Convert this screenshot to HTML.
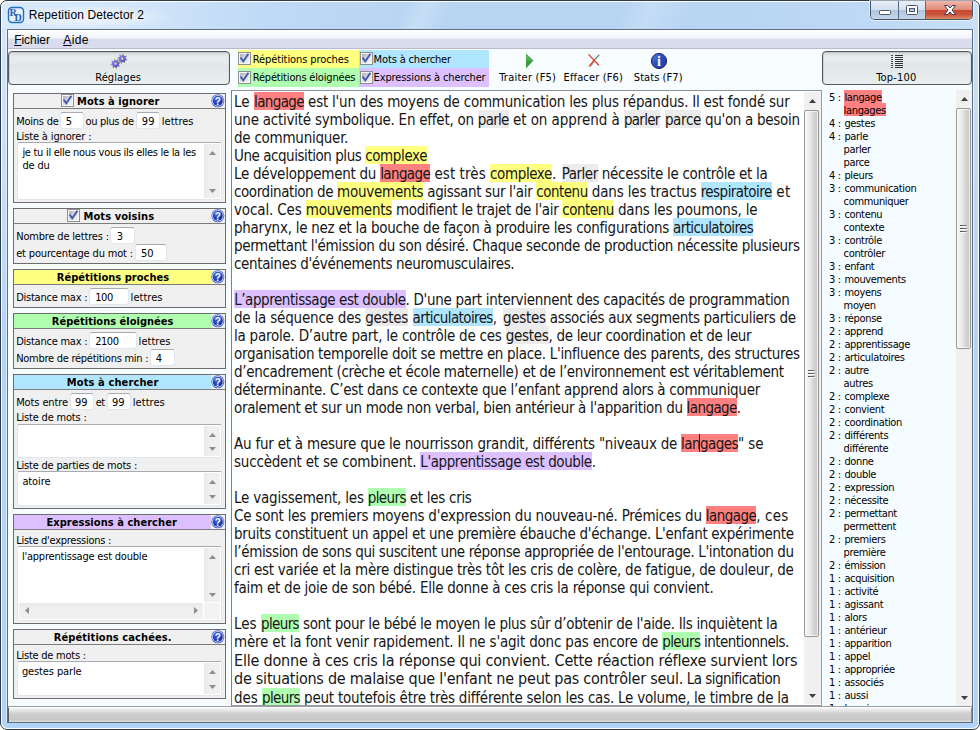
<!DOCTYPE html>
<html lang="fr"><head><meta charset="utf-8"><title>Repetition Detector 2</title>
<style>
html,body{margin:0;padding:0}
body{width:980px;height:730px;position:relative;overflow:hidden;background:#fff;font-family:'DejaVu Sans Condensed','Liberation Sans',sans-serif;font-size:11px;color:#000}
.a{position:absolute;display:block}
.t{position:absolute;white-space:pre}
#win{position:absolute;left:0;top:0;width:978px;height:728px;border:1px solid #2c3a4a;border-radius:7px;background:#fff}
#winin{position:absolute;left:1px;top:1px;right:1px;bottom:1px;border-radius:6px;background:#d3e6fa}
.ln{position:absolute;left:0;width:573px;white-space:pre;color:#161616}
.s{position:absolute;top:0;display:block;box-sizing:border-box;white-space:pre}
.l15{font-size:15px;line-height:18px;height:18px}
.l15 .s{height:18px;padding-top:1px;line-height:18px}
.l16 .s{height:19px;line-height:19px}
.l16{font-size:16px;line-height:19px;height:19px}
.h{padding-top:1px;background-repeat:no-repeat;background-size:100% 18px}
.l16 .h{padding-top:0;background-size:100% 19px}
.row{position:absolute;left:4.1px;height:13px;line-height:13px;font-size:11px;white-space:pre;letter-spacing:-0.35px;padding-top:1px}
.row .n{display:inline-block;width:15.3px}
.row .n.c{width:14.5px}
.row .hh{padding-top:1px;background:linear-gradient(#ff8080,#ff8080) no-repeat;background-size:100% 13px}
u{text-decoration:underline}
</style></head>
<body>
<div id="win"><div id="winin"></div></div>
<svg width="0" height="0" style="position:absolute"><defs><linearGradient id="cbg" x1="0" y1="0" x2="1" y2="1"><stop offset="0" stop-color="#a9adb6"/><stop offset=".5" stop-color="#dcdee2"/><stop offset="1" stop-color="#f4f4f4"/></linearGradient><radialGradient id="hg" cx=".38" cy=".3" r=".75"><stop offset="0" stop-color="#4a74ee"/><stop offset=".55" stop-color="#1d43c0"/><stop offset="1" stop-color="#0c2a8c"/></radialGradient></defs></svg>
<div class="a" style="left:2px;top:2px;width:976px;height:27px;background:linear-gradient(115deg,rgba(255,255,255,0) 0 41%,rgba(255,255,255,.22) 43%,rgba(255,255,255,0) 46% 63%,rgba(255,255,255,.18) 66%,rgba(255,255,255,0) 70%),linear-gradient(90deg,#d9e9fb 0%,#d2e5fa 14%,#bfd9f6 27%,#b7d4f3 45%,#b8d5f4 75%,#c0daf6 92%,#c8dff7 100%);border-radius:6px 6px 0 0;"></div>
<div class="a" style="left:2px;top:29px;width:6px;height:694px;background:linear-gradient(180deg,#d3e6fa 0%,#c6def8 22%,#b4d4f6 45%,#b0d3f6 100%);"></div>
<div class="a" style="left:6px;top:29px;width:1px;height:694px;background:rgba(255,255,255,.55);"></div>
<div class="a" style="left:972px;top:29px;width:6px;height:694px;background:linear-gradient(180deg,#c8dff7 0%,#bedaf7 22%,#b4d4f6 45%,#b0d3f6 100%);"></div>
<div class="a" style="left:2px;top:722px;width:976px;height:6px;background:#b0d3f6;border-radius:0 0 6px 6px;"></div>
<div class="a" style="left:973px;top:29px;width:1px;height:694px;background:rgba(255,255,255,.55);"></div>
<div class="a" style="left:0px;top:2px;width:220px;height:27px;background:radial-gradient(ellipse closest-side at 40% 55%,rgba(255,255,255,.6) 0%,rgba(255,255,255,.4) 50%,rgba(255,255,255,0) 100%);"></div>
<svg class="a" style="left:7px;top:6px" width="18" height="18" viewBox="0 0 18 18">
<rect x="1.5" y="1.5" width="15" height="15" rx="3.5" fill="#e9eef5" stroke="#1f6fc4" stroke-width="1.4"/>
<text x="2.6" y="10" font-family="Liberation Serif,serif" font-size="10" font-weight="700" fill="#1c63b8">R</text>
<text x="7.6" y="15" font-family="Liberation Serif,serif" font-size="10" font-weight="700" fill="#1c63b8">D</text>
</svg>
<div class="t" id="t1" style="left:28.7px;top:8px;font-size:12px;line-height:14px;height:14px;font-family:'Liberation Sans',sans-serif;letter-spacing:0.128px">Repetition Detector 2</div>
<div class="a" style="left:870px;top:1px;width:103px;height:19px;border:1px solid #46566a;border-top:none;border-radius:0 0 5px 5px;box-sizing:border-box;overflow:hidden;box-shadow:0 0 0 1px rgba(255,255,255,.55)">
<div class="a" style="left:0;top:0;width:27px;height:18px;background:linear-gradient(180deg,#e6eef8 0%,#d4e0ef 47%,#b2c5dd 52%,#c4d6eb 100%);border-right:1px solid #5a6a80"></div>
<div class="a" style="left:28px;top:0;width:26px;height:18px;background:linear-gradient(180deg,#e6eef8 0%,#d4e0ef 47%,#b2c5dd 52%,#c4d6eb 100%);border-right:1px solid #5a6a80"></div>
<div class="a" style="left:55px;top:0;width:47px;height:18px;background:linear-gradient(180deg,#f2b6aa 0%,#e28c7a 47%,#cb4830 52%,#c9523c 75%,#dd8c64 100%)"></div>
</div>
<div class="a" style="left:879px;top:10px;width:12px;height:5px;background:#fff;border:1px solid #4a5668;border-radius:1.5px;box-sizing:border-box;"></div>
<div class="a" style="left:906px;top:5px;width:12px;height:10px;background:#fff;border:1px solid #4a5668;border-radius:1.5px;box-sizing:border-box;"></div>
<div class="a" style="left:909px;top:8px;width:6px;height:4px;background:#b8cbe2;border:1px solid #4a5668;box-sizing:border-box;"></div>
<svg class="a" style="left:942.5px;top:4px" width="14" height="12" viewBox="0 0 14 12"><path d="M1.5 1.5 L4.8 1.5 L7 4 L9.2 1.5 L12.5 1.5 L9 6 L12.5 10.5 L9.2 10.5 L7 8 L4.8 10.5 L1.5 10.5 L5 6 Z" fill="#fff" stroke="#3f3f55" stroke-width="1" stroke-linejoin="round"/></svg>

<div class="a" style="left:7px;top:29px;width:966px;height:694px;background:#f7fcff;border:1px solid #5f6f82;box-sizing:border-box;"></div>
<div class="a" style="left:8px;top:30px;width:964px;height:19px;background:linear-gradient(180deg,#ffffff 0%,#f1f3fa 42%,#dadded 50%,#d8dbed 80%,#dde0f0 100%);"></div>
<div class="a" style="left:8px;top:48px;width:964px;height:1px;background:#b7bbcc;"></div>
<div class="a" style="left:8px;top:49px;width:964px;height:1px;background:#f8fcff;"></div>
<div class="t" id="t2" style="left:14.2px;top:33px;font-size:12px;line-height:14px;height:14px;font-family:'Liberation Sans',sans-serif;letter-spacing:-0.039px"><u>F</u>ichier</div>
<div class="t" id="t3" style="left:63.2px;top:33px;font-size:12px;line-height:14px;height:14px;font-family:'Liberation Sans',sans-serif;letter-spacing:0.423px"><u>A</u>ide</div>
<div class="a" style="left:8px;top:51px;width:222px;height:34px;border:1px solid #54595d;border-radius:4px;box-sizing:border-box;background:linear-gradient(180deg,#a9b1b3 0px,#d2d9db 1px,#e1e7e9 3px,#e7edef 5px,#e6ecee 11px,#e0e6e8 12px,#e9eff1 100%);box-shadow:inset 1px 0 0 #cdd3d5,inset -1px 0 0 #dbe1e3;"></div>
<div class="a" style="left:822px;top:51px;width:150px;height:34px;border:1px solid #54595d;border-radius:4px;box-sizing:border-box;background:linear-gradient(180deg,#a9b1b3 0px,#d2d9db 1px,#e1e7e9 3px,#e7edef 5px,#e6ecee 11px,#e0e6e8 12px,#e9eff1 100%);box-shadow:inset 1px 0 0 #cdd3d5,inset -1px 0 0 #dbe1e3;"></div>
<svg class="a" style="left:108px;top:51px" width="22" height="20" viewBox="0 0 22 20"><defs><linearGradient id="gg" x1="0" y1="0" x2="1" y2="1"><stop offset="0" stop-color="#9a9af0"/><stop offset=".5" stop-color="#6a6ad6"/><stop offset="1" stop-color="#4848b4"/></linearGradient></defs><path d="M17.80 7.63 L19.19 8.03 L18.93 9.30 L17.50 9.13 L16.82 10.13 L17.53 11.39 L16.44 12.11 L15.55 10.97 L14.37 11.20 L13.97 12.59 L12.70 12.33 L12.87 10.90 L11.87 10.22 L10.61 10.93 L9.89 9.84 L11.03 8.95 L10.80 7.77 L9.41 7.37 L9.67 6.10 L11.10 6.27 L11.78 5.27 L11.07 4.01 L12.16 3.29 L13.05 4.43 L14.23 4.20 L14.63 2.81 L15.90 3.07 L15.73 4.50 L16.73 5.18 L17.99 4.47 L18.71 5.56 L17.57 6.45 Z" fill="url(#gg)"/><path d="M10.75 14.00 L11.88 14.90 L11.14 15.98 L9.89 15.26 L8.88 15.92 L9.04 17.35 L7.75 17.59 L7.38 16.20 L6.20 15.95 L5.30 17.08 L4.22 16.34 L4.94 15.09 L4.28 14.08 L2.85 14.24 L2.61 12.95 L4.00 12.58 L4.25 11.40 L3.12 10.50 L3.86 9.42 L5.11 10.14 L6.12 9.48 L5.96 8.05 L7.25 7.81 L7.62 9.20 L8.80 9.45 L9.70 8.32 L10.78 9.06 L10.06 10.31 L10.72 11.32 L12.15 11.16 L12.39 12.45 L11.00 12.82 Z" fill="url(#gg)"/><rect x="18.46" y="8.18" width=".9" height=".9" fill="#e9e23c"/><rect x="16.45" y="11.17" width=".9" height=".9" fill="#e9e23c"/><rect x="12.92" y="11.86" width=".9" height=".9" fill="#e9e23c"/><rect x="9.93" y="9.85" width=".9" height=".9" fill="#e9e23c"/><rect x="9.24" y="6.32" width=".9" height=".9" fill="#e9e23c"/><rect x="11.25" y="3.33" width=".9" height=".9" fill="#e9e23c"/><rect x="14.78" y="2.64" width=".9" height=".9" fill="#e9e23c"/><rect x="17.77" y="4.65" width=".9" height=".9" fill="#e9e23c"/><rect x="10.93" y="14.90" width=".9" height=".9" fill="#e9e23c"/><rect x="7.92" y="16.87" width=".9" height=".9" fill="#e9e23c"/><rect x="4.40" y="16.13" width=".9" height=".9" fill="#e9e23c"/><rect x="2.43" y="13.12" width=".9" height=".9" fill="#e9e23c"/><rect x="3.17" y="9.60" width=".9" height=".9" fill="#e9e23c"/><rect x="6.18" y="7.63" width=".9" height=".9" fill="#e9e23c"/><rect x="9.70" y="8.37" width=".9" height=".9" fill="#e9e23c"/><rect x="11.67" y="11.38" width=".9" height=".9" fill="#e9e23c"/><circle cx="7.5" cy="12.7" r="1.1" fill="#e8e4a0"/><circle cx="14.3" cy="7.7" r="1.1" fill="#e8e4a0"/></svg>
<div class="t" id="t4" style="left:95.2px;top:71px;font-size:11px;line-height:13px;height:13px;letter-spacing:0.099px">Réglages</div>
<svg class="a" style="left:890px;top:54px" width="14" height="15" viewBox="0 0 14 15"><rect x="1" y="1" width="2" height="1" fill="#444"/><rect x="5" y="1" width="8" height="1" fill="#333"/><rect x="1" y="3" width="2" height="1" fill="#444"/><rect x="5" y="3" width="8" height="1" fill="#333"/><rect x="1" y="5" width="2" height="1" fill="#444"/><rect x="5" y="5" width="8" height="1" fill="#333"/><rect x="1" y="7" width="2" height="1" fill="#444"/><rect x="5" y="7" width="8" height="1" fill="#333"/><rect x="1" y="9" width="2" height="1" fill="#444"/><rect x="5" y="9" width="8" height="1" fill="#333"/><rect x="1" y="11" width="2" height="1" fill="#444"/><rect x="5" y="11" width="8" height="1" fill="#333"/><rect x="1" y="13" width="2" height="1" fill="#444"/><rect x="5" y="13" width="8" height="1" fill="#333"/></svg>
<div class="t" id="t5" style="left:876.2px;top:71px;font-size:11px;line-height:13px;height:13px;letter-spacing:0.172px">Top-100</div>
<div class="a" style="left:238px;top:50px;width:121px;height:18px;background:#ffff80;"></div>
<div class="a" style="left:359px;top:50px;width:130px;height:18px;background:#b0e6ff;"></div>
<div class="a" style="left:238px;top:68px;width:121px;height:19px;background:#b0ffb0;"></div>
<div class="a" style="left:359px;top:68px;width:130px;height:19px;background:#dcc0ff;"></div>
<svg class="a" style="left:238px;top:52px" width="13" height="13" viewBox="0 0 13 13">
<rect x=".5" y=".5" width="12" height="12" fill="#f6f6f6" stroke="#8e8f8f"/>
<rect x="2" y="2" width="9" height="9" fill="url(#cbg)"/>
<path d="M3.1 6.3 L5.3 9.4 L9.9 2.6" fill="none" stroke="#4459ad" stroke-width="1.9" stroke-linecap="square" stroke-linejoin="miter"/></svg>
<svg class="a" style="left:238px;top:71px" width="13" height="13" viewBox="0 0 13 13">
<rect x=".5" y=".5" width="12" height="12" fill="#f6f6f6" stroke="#8e8f8f"/>
<rect x="2" y="2" width="9" height="9" fill="url(#cbg)"/>
<path d="M3.1 6.3 L5.3 9.4 L9.9 2.6" fill="none" stroke="#4459ad" stroke-width="1.9" stroke-linecap="square" stroke-linejoin="miter"/></svg>
<svg class="a" style="left:360px;top:52px" width="13" height="13" viewBox="0 0 13 13">
<rect x=".5" y=".5" width="12" height="12" fill="#f6f6f6" stroke="#8e8f8f"/>
<rect x="2" y="2" width="9" height="9" fill="url(#cbg)"/>
<path d="M3.1 6.3 L5.3 9.4 L9.9 2.6" fill="none" stroke="#4459ad" stroke-width="1.9" stroke-linecap="square" stroke-linejoin="miter"/></svg>
<svg class="a" style="left:360px;top:71px" width="13" height="13" viewBox="0 0 13 13">
<rect x=".5" y=".5" width="12" height="12" fill="#f6f6f6" stroke="#8e8f8f"/>
<rect x="2" y="2" width="9" height="9" fill="url(#cbg)"/>
<path d="M3.1 6.3 L5.3 9.4 L9.9 2.6" fill="none" stroke="#4459ad" stroke-width="1.9" stroke-linecap="square" stroke-linejoin="miter"/></svg>
<div class="t" id="t6" style="left:252.7px;top:53px;font-size:11px;line-height:13px;height:13px;letter-spacing:-0.092px">Répétitions proches</div>
<div class="t" id="t7" style="left:252.7px;top:71px;font-size:11px;line-height:13px;height:13px;letter-spacing:-0.174px">Répétitions éloignées</div>
<div class="t" id="t8" style="left:373.6px;top:53px;font-size:11px;line-height:13px;height:13px;letter-spacing:-0.142px">Mots à chercher</div>
<div class="t" id="t9" style="left:373.6px;top:71px;font-size:11px;line-height:13px;height:13px;letter-spacing:-0.124px">Expressions à chercher</div>
<svg class="a" style="left:525px;top:53px" width="10" height="16" viewBox="0 0 10 16"><path d="M1 .8 L8.4 7.6 L1 15.4 Z" fill="#3c9a3c"/><path d="M1 .8 L8.4 7.6 L1 7.6 Z" fill="#5aae58"/></svg>
<div class="t" id="t10" style="left:499.2px;top:71px;font-size:11px;line-height:13px;height:13px;letter-spacing:0.236px">Traiter (F5)</div>
<svg class="a" style="left:587px;top:53px" width="14" height="14" viewBox="0 0 14 14">
<path d="M1.8 1.6 L11.6 12" stroke="#dc3c2a" stroke-width="1.25" stroke-linecap="round"/>
<path d="M12 2.2 L7 7.4" stroke="#3a8a5a" stroke-width="1.2" stroke-linecap="round"/>
<path d="M7 7.4 L2.6 13" stroke="#e04030" stroke-width="1.5" stroke-linecap="round"/>
<path d="M6 8.6 L3.4 12.4" stroke="#3a8a5a" stroke-width=".6" stroke-linecap="round" transform="translate(.9 .5)"/>
<circle cx="7" cy="7.4" r="1.1" fill="#e84a30"/></svg>
<div class="t" id="t11" style="left:563.5px;top:71px;font-size:11px;line-height:13px;height:13px;letter-spacing:0.146px">Effacer (F6)</div>
<svg class="a" style="left:650px;top:52px" width="18" height="18" viewBox="0 0 18 18">
<defs><linearGradient id="ig" x1="0" y1="0" x2="1" y2="1"><stop offset="0" stop-color="#5a7ce0"/><stop offset=".5" stop-color="#2a4cc0"/><stop offset="1" stop-color="#1c38a8"/></linearGradient></defs>
<circle cx="9" cy="9" r="7.6" fill="url(#ig)" stroke="#1a2458" stroke-width="1"/>
<text x="9" y="14" text-anchor="middle" font-family="Liberation Serif,serif" font-weight="700" font-size="14" fill="#fff">i</text></svg>
<div class="t" id="t12" style="left:633.8px;top:71px;font-size:11px;line-height:13px;height:13px;letter-spacing:0.064px">Stats (F7)</div>
<div class="a" style="left:13px;top:93px;width:213px;height:110px;background:#f0f0f0;border:1px solid #6d6d6d;box-sizing:border-box;"></div>
<div class="a" style="left:14px;top:108px;width:211px;height:1px;background:#7d7d7d;"></div>
<svg class="a" style="left:61px;top:94px" width="13" height="13" viewBox="0 0 13 13">
<rect x=".5" y=".5" width="12" height="12" fill="#f6f6f6" stroke="#8e8f8f"/>
<rect x="2" y="2" width="9" height="9" fill="url(#cbg)"/>
<path d="M3.1 6.3 L5.3 9.4 L9.9 2.6" fill="none" stroke="#4459ad" stroke-width="1.9" stroke-linecap="square" stroke-linejoin="miter"/></svg>
<div class="t" id="t13" style="left:77.1px;top:95px;font-size:11px;line-height:13px;height:13px;font-weight:700;letter-spacing:0.058px">Mots à ignorer</div>
<svg class="a" style="left:211px;top:94px" width="14" height="14" viewBox="0 0 14 14">
<circle cx="6.8" cy="6.8" r="6.5" fill="#3c5ec8"/>
<circle cx="6.8" cy="6.8" r="5.7" fill="#e8eefc"/>
<circle cx="6.8" cy="6.8" r="5.0" fill="url(#hg)"/>
<text x="6.9" y="10.5" text-anchor="middle" font-family="Liberation Sans,sans-serif" font-weight="700" font-size="10" fill="#fff">?</text></svg>
<div class="t" id="t14" style="left:16.2px;top:115px;font-size:11px;line-height:13px;height:13px;letter-spacing:-0.242px">Moins de</div>
<div class="a" style="left:60px;top:112px;width:24px;height:17px;background:#fff;border:1px solid #dfe6ee;border-top-color:#a9abb2;border-radius:3px;box-sizing:border-box;"></div>
<div class="t" style="left:65.8px;top:115px;font-size:11px;line-height:13px;height:13px;">5</div>
<div class="t" id="t16" style="left:85.5px;top:115px;font-size:11px;line-height:13px;height:13px;letter-spacing:-0.317px">ou plus de</div>
<div class="a" style="left:136px;top:112px;width:24px;height:17px;background:#fff;border:1px solid #dfe6ee;border-top-color:#a9abb2;border-radius:3px;box-sizing:border-box;"></div>
<div class="t" id="t17" style="left:141.8px;top:115px;font-size:11px;line-height:13px;height:13px;letter-spacing:0.106px">99</div>
<div class="t" id="t18" style="left:161.8px;top:115px;font-size:11px;line-height:13px;height:13px;letter-spacing:0.005px">lettres</div>
<div class="t" id="t19" style="left:16.2px;top:130px;font-size:11px;line-height:13px;height:13px;letter-spacing:-0.141px">Liste à ignorer :</div>
<div class="a" style="left:17px;top:142px;width:205px;height:58px;background:#fff;border:1px solid #dfe6ee;border-top-color:#a9abb2;border-radius:2px;box-sizing:border-box;"></div>
<div class="a" style="left:204px;top:144px;width:16px;height:54px;background:linear-gradient(90deg,#e9e9e9 0%,#efefef 30%,#f1f1f1 100%);"></div>
<svg class="a" style="left:209px;top:151px" width="7" height="4" viewBox="0 0 7 4"><polygon points="0,4 3.5,0 7,4" fill="#8e8e8e"/></svg>
<svg class="a" style="left:209px;top:189px" width="7" height="4" viewBox="0 0 7 4"><polygon points="0,0 7,0 3.5,4" fill="#8e8e8e"/></svg>
<div class="t" id="t20" style="left:22.4px;top:146px;font-size:11px;line-height:13px;height:13px;letter-spacing:-0.287px">je tu il elle nous vous ils elles le la les</div>
<div class="t" id="t21" style="left:22.4px;top:159px;font-size:11px;line-height:13px;height:13px;letter-spacing:-0.170px">de du</div>
<div class="a" style="left:13px;top:208px;width:213px;height:56px;background:#f0f0f0;border:1px solid #6d6d6d;box-sizing:border-box;"></div>
<div class="a" style="left:14px;top:223px;width:211px;height:1px;background:#7d7d7d;"></div>
<svg class="a" style="left:67px;top:209px" width="13" height="13" viewBox="0 0 13 13">
<rect x=".5" y=".5" width="12" height="12" fill="#f6f6f6" stroke="#8e8f8f"/>
<rect x="2" y="2" width="9" height="9" fill="url(#cbg)"/>
<path d="M3.1 6.3 L5.3 9.4 L9.9 2.6" fill="none" stroke="#4459ad" stroke-width="1.9" stroke-linecap="square" stroke-linejoin="miter"/></svg>
<div class="t" id="t22" style="left:83.5px;top:210px;font-size:11px;line-height:13px;height:13px;font-weight:700;letter-spacing:0.093px">Mots voisins</div>
<svg class="a" style="left:211px;top:209px" width="14" height="14" viewBox="0 0 14 14">
<circle cx="6.8" cy="6.8" r="6.5" fill="#3c5ec8"/>
<circle cx="6.8" cy="6.8" r="5.7" fill="#e8eefc"/>
<circle cx="6.8" cy="6.8" r="5.0" fill="url(#hg)"/>
<text x="6.9" y="10.5" text-anchor="middle" font-family="Liberation Sans,sans-serif" font-weight="700" font-size="10" fill="#fff">?</text></svg>
<div class="t" id="t23" style="left:16.2px;top:230px;font-size:11px;line-height:13px;height:13px;letter-spacing:-0.184px">Nombre de lettres :</div>
<div class="a" style="left:110px;top:227px;width:25px;height:17px;background:#fff;border:1px solid #dfe6ee;border-top-color:#a9abb2;border-radius:3px;box-sizing:border-box;"></div>
<div class="t" style="left:116.7px;top:230px;font-size:11px;line-height:13px;height:13px;">3</div>
<div class="t" id="t25" style="left:16.2px;top:247px;font-size:11px;line-height:13px;height:13px;letter-spacing:-0.166px">et pourcentage du mot :</div>
<div class="a" style="left:135px;top:244px;width:32px;height:17px;background:#fff;border:1px solid #dfe6ee;border-top-color:#a9abb2;border-radius:3px;box-sizing:border-box;"></div>
<div class="t" id="t26" style="left:140.9px;top:247px;font-size:11px;line-height:13px;height:13px;letter-spacing:0.006px">50</div>
<div class="a" style="left:13px;top:269px;width:213px;height:39px;background:#f0f0f0;border:1px solid #6d6d6d;box-sizing:border-box;"></div>
<div class="a" style="left:14px;top:270px;width:197px;height:14px;background:#ffff80;"></div>
<div class="a" style="left:14px;top:284px;width:211px;height:1px;background:#7d7d7d;"></div>
<div class="t" id="t27" style="left:56.8px;top:271px;font-size:11px;line-height:13px;height:13px;font-weight:700;letter-spacing:0.031px">Répétitions proches</div>
<svg class="a" style="left:211px;top:270px" width="14" height="14" viewBox="0 0 14 14">
<circle cx="6.8" cy="6.8" r="6.5" fill="#3c5ec8"/>
<circle cx="6.8" cy="6.8" r="5.7" fill="#e8eefc"/>
<circle cx="6.8" cy="6.8" r="5.0" fill="url(#hg)"/>
<text x="6.9" y="10.5" text-anchor="middle" font-family="Liberation Sans,sans-serif" font-weight="700" font-size="10" fill="#fff">?</text></svg>
<div class="t" id="t28" style="left:16.2px;top:291px;font-size:11px;line-height:13px;height:13px;letter-spacing:-0.244px">Distance max :</div>
<div class="a" style="left:89px;top:288px;width:40px;height:17px;background:#fff;border:1px solid #dfe6ee;border-top-color:#a9abb2;border-radius:3px;box-sizing:border-box;"></div>
<div class="t" id="t29" style="left:95.2px;top:291px;font-size:11px;line-height:13px;height:13px;letter-spacing:-0.445px">100</div>
<div class="t" id="t30" style="left:130.6px;top:291px;font-size:11px;line-height:13px;height:13px;letter-spacing:0.038px">lettres</div>
<div class="a" style="left:13px;top:313px;width:213px;height:56px;background:#f0f0f0;border:1px solid #6d6d6d;box-sizing:border-box;"></div>
<div class="a" style="left:14px;top:314px;width:197px;height:14px;background:#b0ffb0;"></div>
<div class="a" style="left:14px;top:328px;width:211px;height:1px;background:#7d7d7d;"></div>
<div class="t" id="t31" style="left:51.8px;top:315px;font-size:11px;line-height:13px;height:13px;font-weight:700;letter-spacing:0.019px">Répétitions éloignées</div>
<svg class="a" style="left:211px;top:314px" width="14" height="14" viewBox="0 0 14 14">
<circle cx="6.8" cy="6.8" r="6.5" fill="#3c5ec8"/>
<circle cx="6.8" cy="6.8" r="5.7" fill="#e8eefc"/>
<circle cx="6.8" cy="6.8" r="5.0" fill="url(#hg)"/>
<text x="6.9" y="10.5" text-anchor="middle" font-family="Liberation Sans,sans-serif" font-weight="700" font-size="10" fill="#fff">?</text></svg>
<div class="t" id="t32" style="left:16.2px;top:335px;font-size:11px;line-height:13px;height:13px;letter-spacing:-0.244px">Distance max :</div>
<div class="a" style="left:89px;top:332px;width:48px;height:17px;background:#fff;border:1px solid #dfe6ee;border-top-color:#a9abb2;border-radius:3px;box-sizing:border-box;"></div>
<div class="t" id="t33" style="left:95.2px;top:335px;font-size:11px;line-height:13px;height:13px;letter-spacing:-0.463px">2100</div>
<div class="t" id="t34" style="left:138.6px;top:335px;font-size:11px;line-height:13px;height:13px;letter-spacing:0.038px">lettres</div>
<div class="t" id="t35" style="left:16.2px;top:352px;font-size:11px;line-height:13px;height:13px;letter-spacing:-0.269px">Nombre de répétitions min :</div>
<div class="a" style="left:150px;top:349px;width:25px;height:17px;background:#fff;border:1px solid #dfe6ee;border-top-color:#a9abb2;border-radius:3px;box-sizing:border-box;"></div>
<div class="t" style="left:155.7px;top:352px;font-size:11px;line-height:13px;height:13px;">4</div>
<div class="a" style="left:13px;top:374px;width:213px;height:135px;background:#f0f0f0;border:1px solid #6d6d6d;box-sizing:border-box;"></div>
<div class="a" style="left:14px;top:375px;width:197px;height:14px;background:#b0e6ff;"></div>
<div class="a" style="left:14px;top:389px;width:211px;height:1px;background:#7d7d7d;"></div>
<div class="t" id="t37" style="left:66.8px;top:376px;font-size:11px;line-height:13px;height:13px;font-weight:700;letter-spacing:0.117px">Mots à chercher</div>
<svg class="a" style="left:211px;top:375px" width="14" height="14" viewBox="0 0 14 14">
<circle cx="6.8" cy="6.8" r="6.5" fill="#3c5ec8"/>
<circle cx="6.8" cy="6.8" r="5.7" fill="#e8eefc"/>
<circle cx="6.8" cy="6.8" r="5.0" fill="url(#hg)"/>
<text x="6.9" y="10.5" text-anchor="middle" font-family="Liberation Sans,sans-serif" font-weight="700" font-size="10" fill="#fff">?</text></svg>
<div class="t" id="t38" style="left:16.2px;top:396px;font-size:11px;line-height:13px;height:13px;letter-spacing:-0.115px">Mots entre</div>
<div class="a" style="left:70px;top:393px;width:24px;height:17px;background:#fff;border:1px solid #dfe6ee;border-top-color:#a9abb2;border-radius:3px;box-sizing:border-box;"></div>
<div class="t" id="t39" style="left:74.9px;top:396px;font-size:11px;line-height:13px;height:13px;letter-spacing:0.006px">99</div>
<div class="t" id="t40" style="left:95.8px;top:396px;font-size:11px;line-height:13px;height:13px;letter-spacing:-0.669px">et</div>
<div class="a" style="left:107px;top:393px;width:24px;height:17px;background:#fff;border:1px solid #dfe6ee;border-top-color:#a9abb2;border-radius:3px;box-sizing:border-box;"></div>
<div class="t" id="t41" style="left:111.9px;top:396px;font-size:11px;line-height:13px;height:13px;letter-spacing:0.006px">99</div>
<div class="t" id="t42" style="left:132.8px;top:396px;font-size:11px;line-height:13px;height:13px;letter-spacing:0.038px">lettres</div>
<div class="t" id="t43" style="left:16.2px;top:411px;font-size:11px;line-height:13px;height:13px;letter-spacing:-0.190px">Liste de mots :</div>
<div class="a" style="left:17px;top:424px;width:205px;height:34px;background:#fff;border:1px solid #dfe6ee;border-top-color:#a9abb2;border-radius:2px;box-sizing:border-box;"></div>
<div class="a" style="left:204px;top:426px;width:16px;height:30px;background:linear-gradient(90deg,#e9e9e9 0%,#efefef 30%,#f1f1f1 100%);"></div>
<svg class="a" style="left:209px;top:433px" width="7" height="4" viewBox="0 0 7 4"><polygon points="0,4 3.5,0 7,4" fill="#8e8e8e"/></svg>
<svg class="a" style="left:209px;top:447px" width="7" height="4" viewBox="0 0 7 4"><polygon points="0,0 7,0 3.5,4" fill="#8e8e8e"/></svg>
<div class="t" id="t44" style="left:16.2px;top:459px;font-size:11px;line-height:13px;height:13px;letter-spacing:-0.204px">Liste de parties de mots :</div>
<div class="a" style="left:17px;top:471px;width:205px;height:35px;background:#fff;border:1px solid #dfe6ee;border-top-color:#a9abb2;border-radius:2px;box-sizing:border-box;"></div>
<div class="a" style="left:204px;top:473px;width:16px;height:31px;background:linear-gradient(90deg,#e9e9e9 0%,#efefef 30%,#f1f1f1 100%);"></div>
<svg class="a" style="left:209px;top:480px" width="7" height="4" viewBox="0 0 7 4"><polygon points="0,4 3.5,0 7,4" fill="#8e8e8e"/></svg>
<svg class="a" style="left:209px;top:495px" width="7" height="4" viewBox="0 0 7 4"><polygon points="0,0 7,0 3.5,4" fill="#8e8e8e"/></svg>
<div class="t" id="t45" style="left:22.4px;top:475px;font-size:11px;line-height:13px;height:13px;letter-spacing:-0.114px">atoire</div>
<div class="a" style="left:13px;top:514px;width:213px;height:110px;background:#f0f0f0;border:1px solid #6d6d6d;box-sizing:border-box;"></div>
<div class="a" style="left:14px;top:515px;width:197px;height:14px;background:#dcc0ff;"></div>
<div class="a" style="left:14px;top:529px;width:211px;height:1px;background:#7d7d7d;"></div>
<div class="t" id="t46" style="left:46.4px;top:516px;font-size:11px;line-height:13px;height:13px;font-weight:700;letter-spacing:0.051px">Expressions à chercher</div>
<svg class="a" style="left:211px;top:515px" width="14" height="14" viewBox="0 0 14 14">
<circle cx="6.8" cy="6.8" r="6.5" fill="#3c5ec8"/>
<circle cx="6.8" cy="6.8" r="5.7" fill="#e8eefc"/>
<circle cx="6.8" cy="6.8" r="5.0" fill="url(#hg)"/>
<text x="6.9" y="10.5" text-anchor="middle" font-family="Liberation Sans,sans-serif" font-weight="700" font-size="10" fill="#fff">?</text></svg>
<div class="t" id="t47" style="left:16.2px;top:534px;font-size:11px;line-height:13px;height:13px;letter-spacing:-0.271px">Liste d'expressions :</div>
<div class="a" style="left:17px;top:546px;width:205px;height:75px;background:#fff;border:1px solid #dfe6ee;border-top-color:#a9abb2;border-radius:2px;box-sizing:border-box;"></div>
<div class="a" style="left:204px;top:548px;width:16px;height:54px;background:linear-gradient(90deg,#e9e9e9 0%,#efefef 30%,#f1f1f1 100%);"></div>
<svg class="a" style="left:209px;top:555px" width="7" height="4" viewBox="0 0 7 4"><polygon points="0,4 3.5,0 7,4" fill="#8e8e8e"/></svg>
<svg class="a" style="left:209px;top:593px" width="7" height="4" viewBox="0 0 7 4"><polygon points="0,0 7,0 3.5,4" fill="#8e8e8e"/></svg>
<div class="a" style="left:19px;top:603px;width:184px;height:16px;background:linear-gradient(180deg,#e9e9e9 0%,#efefef 30%,#f1f1f1 100%);"></div>
<div class="a" style="left:204px;top:603px;width:16px;height:16px;background:#f3f3f3;"></div>
<svg class="a" style="left:25px;top:607px" width="4" height="7" viewBox="0 0 4 7"><polygon points="4,0 0,3.5 4,7" fill="#8e8e8e"/></svg>
<svg class="a" style="left:194px;top:607px" width="4" height="7" viewBox="0 0 4 7"><polygon points="0,0 4,3.5 0,7" fill="#8e8e8e"/></svg>
<div class="t" id="t48" style="left:21.9px;top:550px;font-size:11px;line-height:13px;height:13px;letter-spacing:-0.209px">l'apprentissage est double</div>
<div class="a" style="left:13px;top:629px;width:213px;height:70px;background:#f0f0f0;border:1px solid #6d6d6d;box-sizing:border-box;"></div>
<div class="a" style="left:14px;top:644px;width:211px;height:1px;background:#7d7d7d;"></div>
<div class="t" id="t49" style="left:53.8px;top:631px;font-size:11px;line-height:13px;height:13px;font-weight:700;letter-spacing:0.085px">Répétitions cachées.</div>
<svg class="a" style="left:211px;top:630px" width="14" height="14" viewBox="0 0 14 14">
<circle cx="6.8" cy="6.8" r="6.5" fill="#3c5ec8"/>
<circle cx="6.8" cy="6.8" r="5.7" fill="#e8eefc"/>
<circle cx="6.8" cy="6.8" r="5.0" fill="url(#hg)"/>
<text x="6.9" y="10.5" text-anchor="middle" font-family="Liberation Sans,sans-serif" font-weight="700" font-size="10" fill="#fff">?</text></svg>
<div class="t" id="t50" style="left:16.2px;top:649px;font-size:11px;line-height:13px;height:13px;letter-spacing:-0.240px">Liste de mots :</div>
<div class="a" style="left:17px;top:661px;width:205px;height:35px;background:#fff;border:1px solid #dfe6ee;border-top-color:#a9abb2;border-radius:2px;box-sizing:border-box;"></div>
<div class="a" style="left:204px;top:663px;width:16px;height:31px;background:linear-gradient(90deg,#e9e9e9 0%,#efefef 30%,#f1f1f1 100%);"></div>
<svg class="a" style="left:209px;top:670px" width="7" height="4" viewBox="0 0 7 4"><polygon points="0,4 3.5,0 7,4" fill="#8e8e8e"/></svg>
<svg class="a" style="left:209px;top:685px" width="7" height="4" viewBox="0 0 7 4"><polygon points="0,0 7,0 3.5,4" fill="#8e8e8e"/></svg>
<div class="t" id="t51" style="left:21.9px;top:665px;font-size:11px;line-height:13px;height:13px;letter-spacing:-0.115px">gestes parle</div>
<div class="a" style="left:231px;top:90px;width:591px;height:616px;background:#fff;border:1px solid #9a9ea4;border-left-color:#7e8288;border-top-color:#8e9298;box-sizing:border-box;"></div>
<div class="a" style="left:804px;top:92px;width:17px;height:612px;background:#f0f0f0;"></div>
<svg class="a" style="left:809px;top:99px" width="7" height="4" viewBox="0 0 7 4"><polygon points="0,4 3.5,0 7,4" fill="#404040"/></svg>
<svg class="a" style="left:809px;top:694px" width="7" height="4" viewBox="0 0 7 4"><polygon points="0,0 7,0 3.5,4" fill="#404040"/></svg>
<div class="a" style="left:804px;top:110px;width:15px;height:527px;border:1px solid #979797;border-radius:2px;box-sizing:border-box;background:linear-gradient(90deg,#f6f6f6 0%,#eaeaea 40%,#d6d6d6 62%,#c6c6c6 100%);box-shadow:inset 0 0 0 1px rgba(255,255,255,.7);"></div>
<div class="a" style="left:808px;top:370px;width:7px;height:1px;background:linear-gradient(90deg,#444,#8a8a8a);"></div>
<div class="a" style="left:808px;top:371px;width:7px;height:1px;background:rgba(255,255,255,.75);"></div>
<div class="a" style="left:808px;top:373px;width:7px;height:1px;background:linear-gradient(90deg,#444,#8a8a8a);"></div>
<div class="a" style="left:808px;top:374px;width:7px;height:1px;background:rgba(255,255,255,.75);"></div>
<div class="a" style="left:808px;top:376px;width:7px;height:1px;background:linear-gradient(90deg,#444,#8a8a8a);"></div>
<div class="a" style="left:808px;top:377px;width:7px;height:1px;background:rgba(255,255,255,.75);"></div>
<div class="a" id="txt" style="left:231px;top:91px;width:573px;height:614px;overflow:hidden">
<div class="ln l15" style="top:1px"><span class="s" id="t52" style="left:3.0px;letter-spacing:0.085px;">Le </span><span class="s" id="t53" style="left:23.1px;letter-spacing:-0.628px;width:49.9px;background:#ff8080;">langage</span><span class="s" id="t54" style="left:73.0px;letter-spacing:-0.220px;"> est l'un des moyens de communication les plus répandus. Il est fondé sur</span></div>
<div class="ln l15" style="top:19px"><span class="s" id="t55" style="left:3.0px;letter-spacing:-0.236px;">une activité symbolique. En effet, on </span><span class="s" id="t56" style="left:246.8px;letter-spacing:-0.711px;width:30.9px;background:#ebebeb;">parle</span><span class="s" id="t57" style="left:277.7px;letter-spacing:-0.056px;"> et on apprend à </span><span class="s" id="t58" style="left:392.9px;letter-spacing:-0.697px;width:35.8px;background:#ebebeb;">parler</span><span class="s" id="t59" style="left:428.7px;letter-spacing:0.903px;"> </span><span class="s" id="t60" style="left:433.9px;letter-spacing:-0.336px;width:36.1px;background:#ebebeb;">parce</span><span class="s" id="t61" style="left:470.0px;letter-spacing:-0.302px;"> qu'on a besoin</span></div>
<div class="ln l15" style="top:37px"><span class="s" id="t62" style="left:3.0px;letter-spacing:-0.252px;">de communiquer.</span></div>
<div class="ln l15" style="top:55px"><span class="s" id="t63" style="left:3.0px;letter-spacing:-0.453px;">Une acquisition plus </span><span class="s" id="t64" style="left:134.2px;letter-spacing:-0.389px;width:61.9px;background:#ffff80;">complexe</span></div>
<div class="ln l15" style="top:73px"><span class="s" id="t65" style="left:3.0px;letter-spacing:-0.263px;">Le développement du </span><span class="s" id="t66" style="left:149.2px;letter-spacing:-0.628px;width:49.9px;background:#ff8080;">langage</span><span class="s" id="t67" style="left:199.1px;letter-spacing:0.067px;"> est très </span><span class="s" id="t68" style="left:259.1px;letter-spacing:-0.402px;width:61.8px;background:#ffff80;">complexe</span><span class="s" id="t69" style="left:320.9px;letter-spacing:0.611px;">. </span><span class="s" id="t70" style="left:330.7px;letter-spacing:-0.465px;width:36.1px;background:#ebebeb;">Parler</span><span class="s" id="t71" style="left:366.8px;letter-spacing:-0.301px;"> nécessite le contrôle et la</span></div>
<div class="ln l15" style="top:91px"><span class="s" id="t72" style="left:3.0px;letter-spacing:-0.416px;">coordination de </span><span class="s" id="t73" style="left:106.0px;letter-spacing:-0.228px;width:86.3px;background:#ffff80;">mouvements</span><span class="s" id="t74" style="left:192.3px;letter-spacing:-0.353px;"> agissant sur l'air </span><span class="s" id="t75" style="left:305.3px;letter-spacing:-0.505px;width:51.4px;background:#ffff80;">contenu</span><span class="s" id="t76" style="left:356.7px;letter-spacing:-0.169px;"> dans les tractus </span><span class="s" id="t77" style="left:469.7px;letter-spacing:-0.542px;width:71.0px;background:#b0e6ff;">respiratoire</span><span class="s" id="t78" style="left:540.7px;letter-spacing:0.303px;"> et</span></div>
<div class="ln l15" style="top:109px"><span class="s" id="t79" style="left:3.0px;letter-spacing:-0.136px;">vocal. Ces </span><span class="s" id="t80" style="left:74.8px;letter-spacing:-0.228px;width:86.3px;background:#ffff80;">mouvements</span><span class="s" id="t81" style="left:161.1px;letter-spacing:-0.343px;"> modifient le trajet de l'air </span><span class="s" id="t82" style="left:331.3px;letter-spacing:-0.491px;width:51.5px;background:#ffff80;">contenu</span><span class="s" id="t83" style="left:382.8px;letter-spacing:-0.179px;"> dans les poumons, le</span></div>
<div class="ln l15" style="top:127px"><span class="s" id="t84" style="left:3.0px;letter-spacing:-0.262px;">pharynx, le nez et la bouche de façon à produire les configurations </span><span class="s" id="t85" style="left:442.1px;letter-spacing:-0.622px;width:80.0px;background:#b0e6ff;">articulatoires</span></div>
<div class="ln l15" style="top:145px"><span class="s" id="t86" style="left:3.0px;letter-spacing:-0.349px;">permettant l'émission du son désiré. Chaque seconde de production nécessite plusieurs</span></div>
<div class="ln l15" style="top:163px"><span class="s" id="t87" style="left:3.0px;letter-spacing:-0.350px;">centaines d'événements neuromusculaires.</span></div>
<div class="ln l15" style="top:199px"><span class="s" id="t88" style="left:3.2px;letter-spacing:-0.436px;width:171.4px;background:#dcc0ff;">L’apprentissage est double</span><span class="s" id="t89" style="left:174.6px;letter-spacing:-0.320px;">. D'une part interviennent des capacités de programmation</span></div>
<div class="ln l15" style="top:217px"><span class="s" id="t90" style="left:3.0px;letter-spacing:-0.200px;">de la séquence des </span><span class="s" id="t91" style="left:134.2px;letter-spacing:-0.289px;width:42.8px;background:#ebebeb;">gestes</span><span class="s" id="t92" style="left:177.0px;letter-spacing:0.303px;"> </span><span class="s" id="t93" style="left:181.6px;letter-spacing:-0.607px;width:80.2px;background:#b0e6ff;">articulatoires</span><span class="s" id="t94" style="left:261.8px;letter-spacing:0.761px;">, </span><span class="s" id="t95" style="left:271.9px;letter-spacing:-0.272px;width:42.9px;background:#ebebeb;">gestes</span><span class="s" id="t96" style="left:314.8px;letter-spacing:-0.324px;"> associés aux segments particuliers de</span></div>
<div class="ln l15" style="top:235px"><span class="s" id="t97" style="left:3.0px;letter-spacing:-0.233px;">la parole. D’autre part, le contrôle de ces </span><span class="s" id="t98" style="left:274.7px;letter-spacing:-0.272px;width:42.9px;background:#ebebeb;">gestes</span><span class="s" id="t99" style="left:317.6px;letter-spacing:-0.338px;">, de leur coordination et de leur</span></div>
<div class="ln l15" style="top:253px"><span class="s" id="t100" style="left:3.0px;letter-spacing:-0.308px;">organisation temporelle doit se mettre en place. L'influence des parents, des structures</span></div>
<div class="ln l15" style="top:271px"><span class="s" id="t101" style="left:3.0px;letter-spacing:-0.329px;">d’encadrement (crèche et école maternelle) et de l’environnement est véritablement</span></div>
<div class="ln l15" style="top:289px"><span class="s" id="t102" style="left:3.0px;letter-spacing:-0.294px;">déterminante. C’est dans ce contexte que l’enfant apprend alors à communiquer</span></div>
<div class="ln l15" style="top:307px"><span class="s" id="t103" style="left:3.0px;letter-spacing:-0.334px;">oralement et sur un mode non verbal, bien antérieur à l'apparition du </span><span class="s" id="t104" style="left:455.6px;letter-spacing:-0.585px;width:50.2px;background:#ff8080;">langage</span><span class="s" id="t105" style="left:505.8px;letter-spacing:0.603px;">.</span></div>
<div class="ln l15" style="top:343px"><span class="s" id="t106" style="left:3.0px;letter-spacing:-0.222px;">Au fur et à mesure que le nourrisson grandit, différents "niveaux de </span><span class="s" id="t107" style="left:450.1px;letter-spacing:-0.554px;width:56.9px;background:#ff8080;">langages</span><span class="s" id="t108" style="left:507.0px;letter-spacing:-0.082px;">" se</span></div>
<div class="ln l15" style="top:361px"><span class="s" id="t109" style="left:3.0px;letter-spacing:-0.198px;">succèdent et se combinent. </span><span class="s" id="t110" style="left:189.3px;letter-spacing:-0.414px;width:171.4px;background:#dcc0ff;">L'apprentissage est double</span><span class="s" id="t111" style="left:360.7px;letter-spacing:0.403px;">.</span></div>
<div class="ln l15" style="top:397px"><span class="s" id="t112" style="left:3.0px;letter-spacing:-0.212px;">Le vagissement, les </span><span class="s" id="t113" style="left:136.8px;letter-spacing:-0.628px;width:38.0px;background:#b0ffb0;">pleurs</span><span class="s" id="t114" style="left:174.8px;letter-spacing:-0.290px;"> et les cris</span></div>
<div class="ln l15" style="top:415px"><span class="s" id="t115" style="left:3.0px;letter-spacing:-0.220px;">Ce sont les premiers moyens d'expression du nouveau-né. Prémices du </span><span class="s" id="t116" style="left:474.8px;letter-spacing:-0.557px;width:50.4px;background:#ff8080;">langage</span><span class="s" id="t117" style="left:525.2px;letter-spacing:0.174px;">, ces</span></div>
<div class="ln l15" style="top:433px"><span class="s" id="t118" style="left:3.0px;letter-spacing:-0.311px;">bruits constituent un appel et une première ébauche d'échange. L'enfant expérimente</span></div>
<div class="ln l15" style="top:451px"><span class="s" id="t119" style="left:3.0px;letter-spacing:-0.382px;">l’émission de sons qui suscitent une réponse appropriée de l'entourage. L'intonation du</span></div>
<div class="ln l15" style="top:469px"><span class="s" id="t120" style="left:3.0px;letter-spacing:-0.261px;">cri est variée et la mère distingue très tôt les cris de colère, de fatigue, de douleur, de</span></div>
<div class="ln l15" style="top:487px"><span class="s" id="t121" style="left:3.0px;letter-spacing:-0.252px;">faim et de joie de son bébé. Elle donne à ces cris la réponse qui convient.</span></div>
<div class="ln l15" style="top:523px"><span class="s" id="t122" style="left:3.0px;letter-spacing:0.031px;">Les </span><span class="s" id="t123" style="left:30.0px;letter-spacing:-0.628px;width:38.0px;background:#b0ffb0;">pleurs</span><span class="s" id="t124" style="left:68.0px;letter-spacing:-0.326px;"> sont pour le bébé le moyen le plus sûr d’obtenir de l'aide. Ils inquiètent la</span></div>
<div class="ln l15" style="top:541px"><span class="s" id="t125" style="left:3.0px;letter-spacing:-0.187px;">mère et la font venir rapidement. Il ne s'agit donc pas encore de </span><span class="s" id="t126" style="left:431.3px;letter-spacing:-0.628px;width:38.0px;background:#b0ffb0;">pleurs</span><span class="s" id="t127" style="left:469.3px;letter-spacing:-0.541px;"> intentionnels.</span></div>
<div class="ln l16" style="top:560px"><span class="s" id="t128" style="left:3.0px;letter-spacing:-0.201px;">Elle donne à ces cris la réponse qui convient. Cette réaction réflexe survient lors</span></div>
<div class="ln l16" style="top:578px"><span class="s" id="t129" style="left:3.0px;letter-spacing:-0.238px;">de situations de malaise que l'enfant ne peut pas contrôler seul.</span><span class="s" id="t130" style="left:452.0px;letter-spacing:-0.521px;font-size:15px;padding-top:1px;"> La signification</span></div>
<div class="ln l15" style="top:597px"><span class="s" id="t131" style="left:3.0px;letter-spacing:-0.051px;">des </span><span class="s" id="t132" style="left:31.0px;letter-spacing:-0.628px;width:38.0px;background:#b0ffb0;">pleurs</span><span class="s" id="t133" style="left:69.0px;letter-spacing:-0.219px;"> peut toutefois être très différente selon les cas. Le volume, le timbre de la</span></div>
</div>
<div class="a" style="left:699px;top:434px;width:1px;height:18px;background:#222;"></div>
<div class="a" style="left:822px;top:88px;width:150px;height:619px;background:#f5fcff;"></div>
<div class="a" id="lst" style="left:825px;top:90px;width:130px;height:617px;overflow:hidden">
<div class="row" style="top:0px"><span class="n">5 :</span><span class="hh">langage</span></div>
<div class="row" style="top:13px"><span class="n c"></span><span class="hh">langages</span></div>
<div class="row" style="top:26px"><span class="n">4 :</span>gestes</div>
<div class="row" style="top:39px"><span class="n">4 :</span>parle</div>
<div class="row" style="top:52px"><span class="n c"></span>parler</div>
<div class="row" style="top:65px"><span class="n c"></span>parce</div>
<div class="row" style="top:78px"><span class="n">4 :</span>pleurs</div>
<div class="row" style="top:91px"><span class="n">3 :</span>communication</div>
<div class="row" style="top:104px"><span class="n c"></span>communiquer</div>
<div class="row" style="top:117px"><span class="n">3 :</span>contenu</div>
<div class="row" style="top:130px"><span class="n c"></span>contexte</div>
<div class="row" style="top:143px"><span class="n">3 :</span>contrôle</div>
<div class="row" style="top:156px"><span class="n c"></span>contrôler</div>
<div class="row" style="top:169px"><span class="n">3 :</span>enfant</div>
<div class="row" style="top:182px"><span class="n">3 :</span>mouvements</div>
<div class="row" style="top:195px"><span class="n">3 :</span>moyens</div>
<div class="row" style="top:208px"><span class="n c"></span>moyen</div>
<div class="row" style="top:221px"><span class="n">3 :</span>réponse</div>
<div class="row" style="top:234px"><span class="n">2 :</span>apprend</div>
<div class="row" style="top:247px"><span class="n">2 :</span>apprentissage</div>
<div class="row" style="top:260px"><span class="n">2 :</span>articulatoires</div>
<div class="row" style="top:273px"><span class="n">2 :</span>autre</div>
<div class="row" style="top:286px"><span class="n c"></span>autres</div>
<div class="row" style="top:299px"><span class="n">2 :</span>complexe</div>
<div class="row" style="top:312px"><span class="n">2 :</span>convient</div>
<div class="row" style="top:325px"><span class="n">2 :</span>coordination</div>
<div class="row" style="top:338px"><span class="n">2 :</span>différents</div>
<div class="row" style="top:351px"><span class="n c"></span>différente</div>
<div class="row" style="top:364px"><span class="n">2 :</span>donne</div>
<div class="row" style="top:377px"><span class="n">2 :</span>double</div>
<div class="row" style="top:390px"><span class="n">2 :</span>expression</div>
<div class="row" style="top:403px"><span class="n">2 :</span>nécessite</div>
<div class="row" style="top:416px"><span class="n">2 :</span>permettant</div>
<div class="row" style="top:429px"><span class="n c"></span>permettent</div>
<div class="row" style="top:442px"><span class="n">2 :</span>premiers</div>
<div class="row" style="top:455px"><span class="n c"></span>première</div>
<div class="row" style="top:468px"><span class="n">2 :</span>émission</div>
<div class="row" style="top:481px"><span class="n">1 :</span>acquisition</div>
<div class="row" style="top:494px"><span class="n">1 :</span>activité</div>
<div class="row" style="top:507px"><span class="n">1 :</span>agissant</div>
<div class="row" style="top:520px"><span class="n">1 :</span>alors</div>
<div class="row" style="top:533px"><span class="n">1 :</span>antérieur</div>
<div class="row" style="top:546px"><span class="n">1 :</span>apparition</div>
<div class="row" style="top:559px"><span class="n">1 :</span>appel</div>
<div class="row" style="top:572px"><span class="n">1 :</span>appropriée</div>
<div class="row" style="top:585px"><span class="n">1 :</span>associés</div>
<div class="row" style="top:598px"><span class="n">1 :</span>aussi</div>
<div class="row" style="top:611px"><span class="n">1 :</span>besoin</div>
</div>
<div class="a" style="left:956px;top:90px;width:16px;height:617px;background:#f0f0f0;"></div>
<svg class="a" style="left:961px;top:97px" width="7" height="4" viewBox="0 0 7 4"><polygon points="0,4 3.5,0 7,4" fill="#404040"/></svg>
<svg class="a" style="left:961px;top:696px" width="7" height="4" viewBox="0 0 7 4"><polygon points="0,0 7,0 3.5,4" fill="#404040"/></svg>
<div class="a" style="left:956px;top:108px;width:15px;height:241px;border:1px solid #979797;border-radius:2px;box-sizing:border-box;background:linear-gradient(90deg,#f6f6f6 0%,#eaeaea 40%,#d6d6d6 62%,#c6c6c6 100%);box-shadow:inset 0 0 0 1px rgba(255,255,255,.7);"></div>
<div class="a" style="left:960px;top:225px;width:7px;height:1px;background:linear-gradient(90deg,#444,#8a8a8a);"></div>
<div class="a" style="left:960px;top:226px;width:7px;height:1px;background:rgba(255,255,255,.75);"></div>
<div class="a" style="left:960px;top:228px;width:7px;height:1px;background:linear-gradient(90deg,#444,#8a8a8a);"></div>
<div class="a" style="left:960px;top:229px;width:7px;height:1px;background:rgba(255,255,255,.75);"></div>
<div class="a" style="left:960px;top:231px;width:7px;height:1px;background:linear-gradient(90deg,#444,#8a8a8a);"></div>
<div class="a" style="left:960px;top:232px;width:7px;height:1px;background:rgba(255,255,255,.75);"></div>
<div class="a" style="left:8px;top:706px;width:964px;height:1px;background:#989ca2;"></div>
<div class="a" style="left:8px;top:707px;width:964px;height:15px;background:linear-gradient(180deg,#f3f3f3 0%,#e2e2e2 22%,#cdcdcd 42%,#c8c8c8 84%,#dedede 100%);border:1px solid #5a6068;border-top-color:#fff;border-bottom:none;border-right-color:#8a8f96;box-sizing:border-box;"></div>
</body></html>
